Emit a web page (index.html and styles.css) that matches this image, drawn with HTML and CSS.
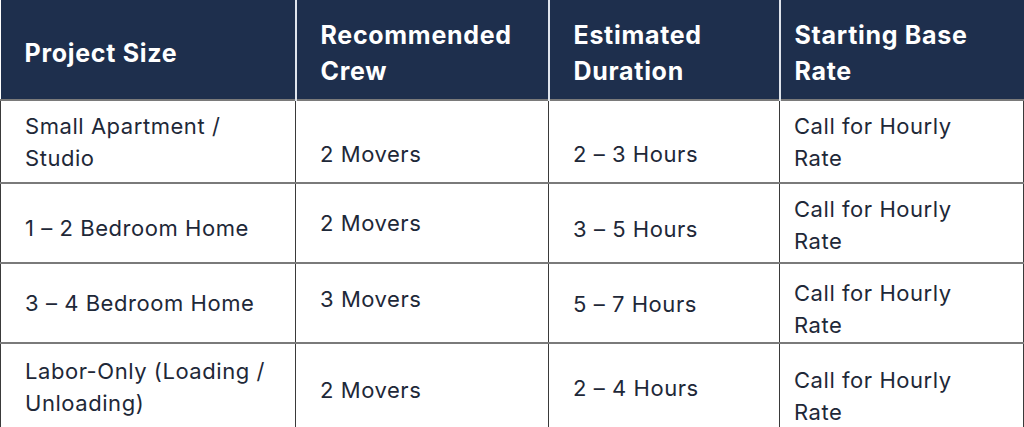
FILE: index.html
```html
<!DOCTYPE html>
<html>
<head>
<meta charset="utf-8">
<link rel="stylesheet" href="styles.css">
</head>
<body>
<table class="rates">
  <colgroup>
    <col class="c1"><col class="c2"><col class="c3"><col class="c4">
  </colgroup>
  <thead>
    <tr class="head">
      <th>Project Size</th>
      <th>Recommended<br>Crew</th>
      <th>Estimated<br>Duration</th>
      <th class="last">Starting Base<br>Rate</th>
    </tr>
  </thead>
  <tbody>
    <tr class="r1">
      <td>Small Apartment /<br>Studio</td>
      <td class="d24">2 Movers</td>
      <td class="d24">2 – 3 Hours</td>
      <td class="last">Call for Hourly<br>Rate</td>
    </tr>
    <tr class="r2">
      <td class="d10">1 – 2 Bedroom Home</td>
      <td>2 Movers</td>
      <td class="d12">3 – 5 Hours</td>
      <td class="last d4">Call for Hourly<br>Rate</td>
    </tr>
    <tr class="r3">
      <td>3 – 4 Bedroom Home</td>
      <td class="u8">3 Movers</td>
      <td class="d2">5 – 7 Hours</td>
      <td class="last d12">Call for Hourly<br>Rate</td>
    </tr>
    <tr class="r4">
      <td class="d2">Labor-Only (Loading /<br>Unloading)</td>
      <td class="d8">2 Movers</td>
      <td class="d4">2 – 4 Hours</td>
      <td class="last d20">Call for Hourly<br>Rate</td>
    </tr>
  </tbody>
</table>
</body>
</html>
```
FILE: styles.css
```css
html, body {
  margin: 0;
  padding: 0;
  background: #ffffff;
}
body {
  font-family: "Inter", "Liberation Sans", sans-serif;
  color: #1e2838;
}
.rates {
  border-collapse: collapse;
  table-layout: fixed;
  width: 1023px;
}
.c1 { width: 295px; }
.c2 { width: 253px; }
.c3 { width: 231px; }
.c4 { width: 244px; }
.rates th {
  background: #1e2f4d;
  color: #ffffff;
  font-size: 25px;
  font-weight: 700;
  letter-spacing: 0.7px;
  line-height: 36px;
  text-align: left;
  vertical-align: middle;
  padding: 6px 10px 0 24px;
  height: 100px;
  box-sizing: border-box;
  border-left: 2px solid #dfe4ec;
}
.rates th:first-child { border-left: none; }
.rates td {
  font-size: 22px;
  letter-spacing: 0.55px;
  line-height: 32px;
  vertical-align: middle;
  padding: 0 10px 0 24px;
  box-sizing: border-box;
  border: 1px solid #3a3a3a;
  border-top: 2px solid #7a7a7a;
}
.rates th.last,
.rates td.last { padding-left: 14px; }
.r1 td { height: 83px; }
.r2 td { height: 80px; }
.r3 td { height: 80px; }
.r4 td { height: 84px; }
.rates td.d2 { padding-top: 2px; }
.rates td.d4 { padding-top: 4px; }
.rates td.d8 { padding-top: 8px; }
.rates td.d10 { padding-top: 10px; }
.rates td.d12 { padding-top: 12px; }
.rates td.d20 { padding-top: 20px; }
.rates td.d24 { padding-top: 24px; }
.rates td.u8 { padding-bottom: 8px; }
```
